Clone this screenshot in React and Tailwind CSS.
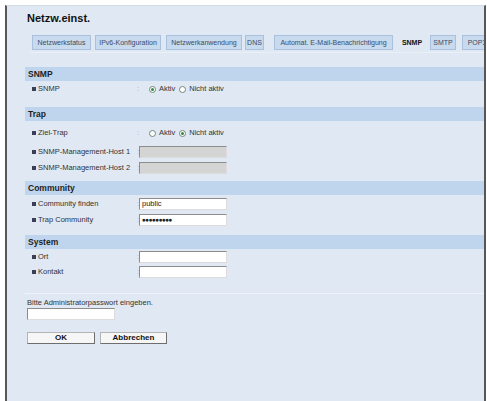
import React from "react";

const tabs = [
    { label: "Netzwerkstatus", ml: "ml-0", w: "w-[59px]" },
    { label: "IPv6-Konfiguration", ml: "ml-[4px]", w: "w-[66px]" },
    { label: "Netzwerkanwendung", ml: "ml-[5px]", w: "w-[76px]" },
    { label: "DNS", ml: "ml-[3px]", w: "w-[19px]" },
    { label: "Automat. E-Mail-Benachrichtigung", ml: "ml-[10px]", w: "w-[119px]" },
    { label: "SNMP", ml: "ml-[4px]", w: "w-[30px]", active: true },
    { label: "SMTP", ml: "ml-[3px]", w: "w-[26px]" },
    { label: "POP3", ml: "ml-[6px]", w: "w-[30px]" },
];

const Tab = ({ tab }) => (
    <div
        className={`${tab.ml} ${tab.w} h-[15px] shrink-0 flex items-center justify-center text-[7px] leading-none whitespace-nowrap ${
            tab.active
                ? "font-bold text-[#111]"
                : "bg-[#c7daee] border border-[#a9c1dc] text-[#3d4b66]"
        }`}
    >
        {tab.label}
    </div>
);

// Section title bar (SNMP, Trap, ...)
const Bar = ({ title, className = "" }) => (
    <div className={`ml-[18px] h-[14px] bg-[#bed5ed] flex items-center pl-[3px] text-[8.5px] font-bold text-[#1e1e1e] leading-none ${className}`}>
        {title}
    </div>
);

const Label = ({ text }) => (
    <div className="w-[105px] flex items-center">
        <span className="w-[4px] h-[4px] bg-[#3b3f55] mr-[2px]" />
        <span className="text-[7.5px] leading-none text-[#333]">{text}</span>
    </div>
);

const Colon = () => <span className="w-[2px] text-[7.5px] leading-none text-[#a8a8a8]">:</span>;

const Radio = ({ checked }) => (
    <span className="w-[7px] h-[7px] rounded-full border border-[#6f8a78] bg-white flex items-center justify-center">
        {checked && <span className="w-[3px] h-[3px] rounded-full bg-[#2e8a3e]" />}
    </span>
);

const RadioRow = ({ label, active, className = "" }) => (
    <div className={`h-[16px] pl-[25px] flex items-center ${className}`}>
        <Label text={label} />
        <Colon />
        <div className="ml-[10px] flex items-center text-[7.5px] leading-none text-[#333]">
            <Radio checked={active} />
            <span className="ml-[3px]">Aktiv</span>
            <span className="ml-[4px]"><Radio checked={!active} /></span>
            <span className="ml-[3px]">Nicht aktiv</span>
        </div>
    </div>
);

const TextRow = ({ label, value = "", disabled, password, className = "" }) => (
    <div className={`h-[16px] pl-[25px] flex items-center ${className}`}>
        <Label text={label} />
        <Colon />
        <div
            className={`w-[88px] h-[12px] border border-[#8c8c8c] border-b-[#dcdcdc] border-r-[#dcdcdc] flex items-center pl-[2px] text-[7.5px] leading-none text-[#222] ${
                disabled ? "bg-[#d4d4d4]" : "bg-white"
            }`}
        >
            {password ? <span className="font-bold tracking-[-0.6px] text-[6.5px]">●●●●●●●●●</span> : value}
        </div>
    </div>
);

const Button = ({ children, className = "" }) => (
    <button className={`h-[12px] bg-[#f6f6f6] border border-[#b4b4b4] border-b-[#6e6e6e] border-r-[#6e6e6e] text-[8px] font-bold leading-none text-[#111] ${className}`}>
        {children}
    </button>
);

export default function App() {
    return (
        <div className="w-[487px] h-[401px] overflow-hidden bg-white font-['Liberation_Sans',Arial,sans-serif]">
            <div className="ml-[5px] mt-[5px] w-[481px] h-[396px] overflow-hidden bg-[#dfe8f3] border-l-2 border-r-2 border-[#575757] border-t border-t-[#d3dbe4]">
                <h1 className="pl-[20px] pt-[5px] text-[11px] leading-[14px] font-bold text-[#111]">Netzw.einst.</h1>

                {/* tab strip */}
                <div className="mt-[10px] pl-[25px] flex">
                    {tabs.map((t) => (
                        <Tab key={t.label} tab={t} />
                    ))}
                </div>
                <div className="ml-[23px] mt-[2px] h-px bg-[#eaf0f7]" />

                {/* SNMP */}
                <Bar title="SNMP" className="mt-[14px]" />
                <RadioRow label="SNMP" active />

                {/* Trap */}
                <Bar title="Trap" className="mt-[10px]" />
                <RadioRow label="Ziel-Trap" active={false} className="mt-[4px]" />
                <TextRow label="SNMP-Management-Host 1" disabled className="mt-[3px]" />
                <TextRow label="SNMP-Management-Host 2" disabled className="!h-[15px]" />

                {/* Community */}
                <Bar title="Community" className="mt-[6px]" />
                <TextRow label="Community finden" value="public" className="mt-[1px]" />
                <TextRow label="Trap Community" password />

                {/* System */}
                <Bar title="System" className="mt-[7px]" />
                <TextRow label="Ort" className="!h-[15px]" />
                <TextRow label="Kontakt" className="!h-[15px]" />

                <div className="ml-[18px] mt-[14px] h-px bg-[#eef3f9]" />

                <div className="pl-[20px] mt-[4px]">
                    <div className="text-[7.5px] leading-[10px] text-[#333]">Bitte Administratorpasswort eingeben.</div>
                    <div className="w-[88px] h-[12px] bg-white border border-[#8c8c8c] border-b-[#dcdcdc] border-r-[#dcdcdc]" />
                    <div className="mt-[12px] flex">
                        <Button className="w-[68px]">OK</Button>
                        <Button className="ml-[5px] w-[67px]">Abbrechen</Button>
                    </div>
                </div>
            </div>
        </div>
    );
}
